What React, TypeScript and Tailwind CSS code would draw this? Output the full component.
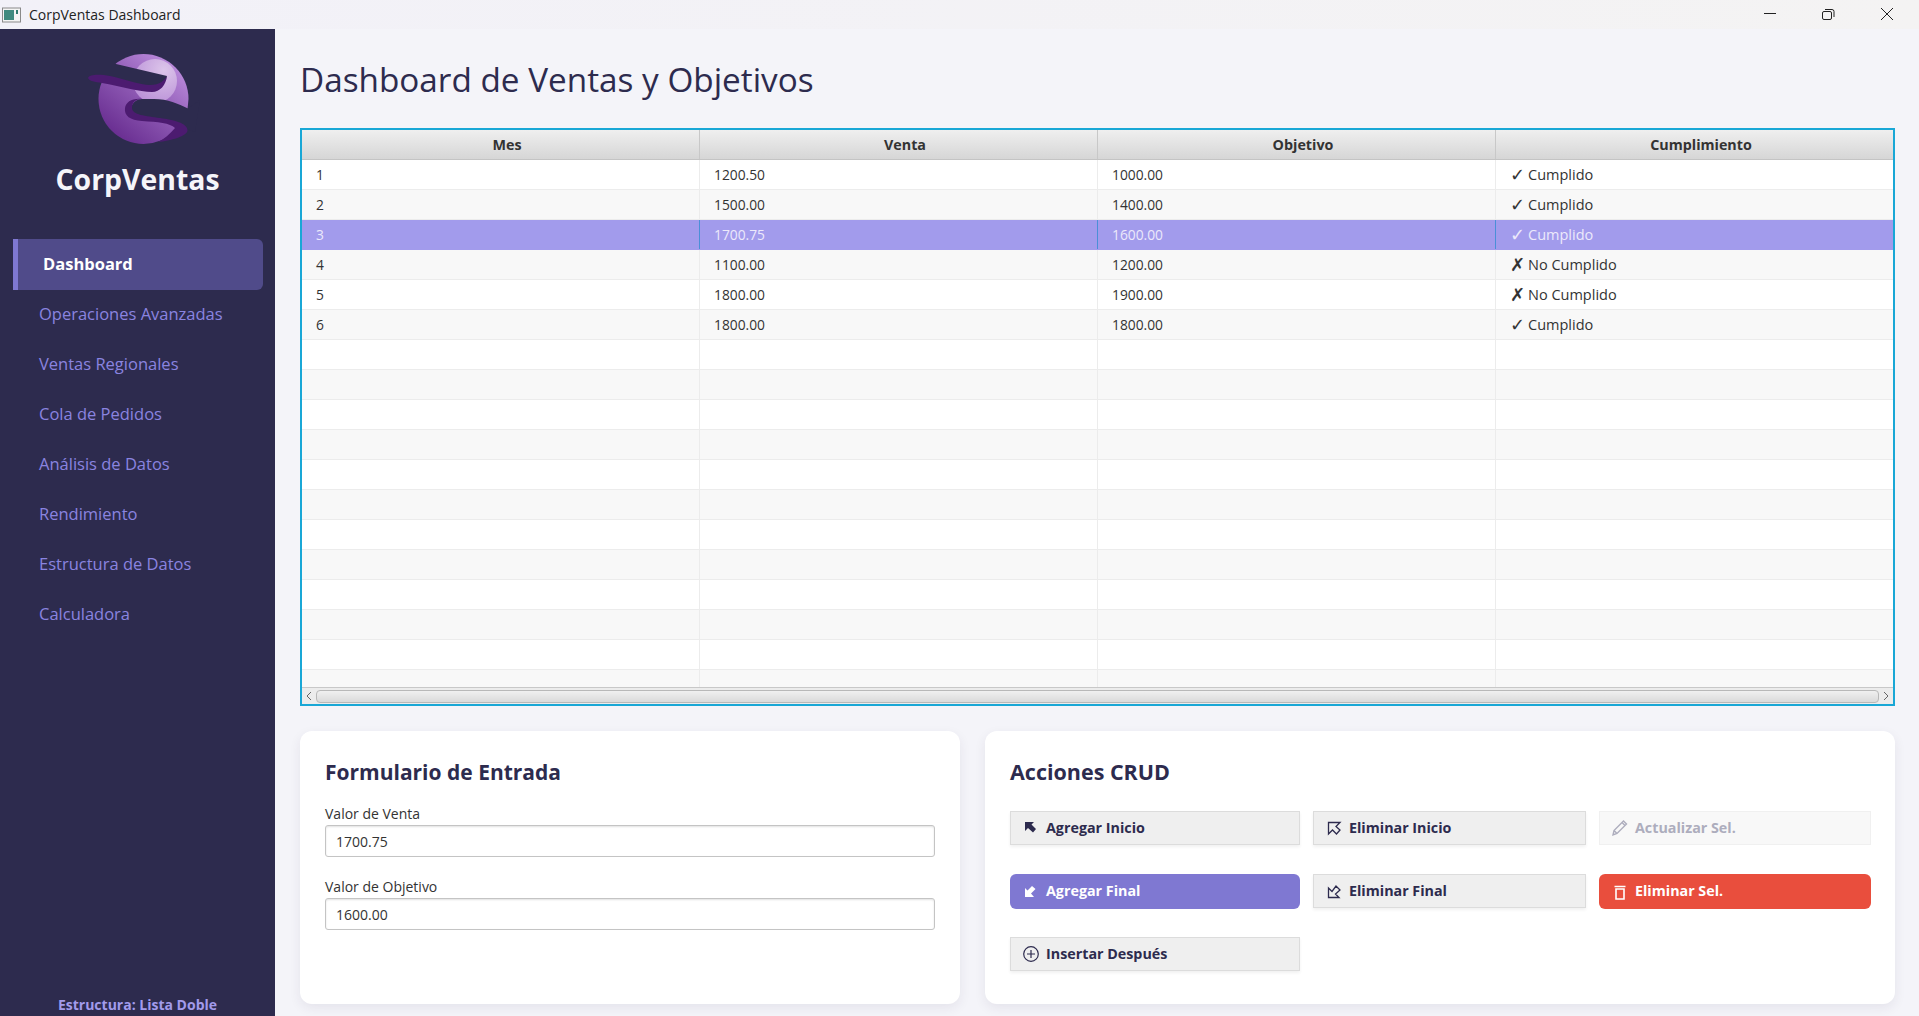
import React from "react";

const font = { fontFamily: '"Open Sans", "Noto Sans", sans-serif' };

const rows = [
  ["1", "1200.50", "1000.00", "✓ Cumplido"],
  ["2", "1500.00", "1400.00", "✓ Cumplido"],
  ["3", "1700.75", "1600.00", "✓ Cumplido"],
  ["4", "1100.00", "1200.00", "✗ No Cumplido"],
  ["5", "1800.00", "1900.00", "✗ No Cumplido"],
  ["6", "1800.00", "1800.00", "✓ Cumplido"],
  ...Array.from({ length: 12 }, () => ["", "", "", ""]),
];

const nav = ["Operaciones Avanzadas", "Ventas Regionales", "Cola de Pedidos", "Análisis de Datos", "Rendimiento", "Estructura de Datos", "Calculadora"];

function Logo() {
  return (
    <svg width="130" height="120" viewBox="0 0 130 120" className="block">
      <defs>
        <linearGradient id="sph" x1="0.85" y1="0.1" x2="0.2" y2="0.9">
          <stop offset="0" stopColor="#bb8bdc" />
          <stop offset="0.55" stopColor="#8a55b0" />
          <stop offset="1" stopColor="#6a2f92" />
        </linearGradient>
        <radialGradient id="hi" cx="0.7" cy="0.25" r="0.8">
          <stop offset="0" stopColor="#dcc5ea" />
          <stop offset="1" stopColor="#bb92d8" />
        </radialGradient>
      </defs>
      <circle cx="73.5" cy="59" r="45" fill="url(#sph)" />
      <circle cx="85" cy="41" r="22" fill="url(#hi)" />
      <path d="M118 68.5 C108 64 98 59 84 59 L72 59 C63 60 60 66 62 72 C66 77 90 78 104 84 L125 92 L130 60 Z" fill="#2d2b4e" />
      <path d="M55 68 C54 76 60 80 72 81 C88 82 100 83 105 88 C100 94 94 99 88 102 C100 101 118 96 117.500 90 C117 83 104 80 90 78 C76 76 62 75 62 68 C62 62 66 59 72 59 C62 58 56 62 55 68 Z" fill="#4c1b70" />
      <path d="M46 24 L97 36 C94 45 90 49 82 50 L50 42 L20 35 L10 20 L40 20 Z" fill="#2d2b4e" />
      <path d="M18 38 C19 34 30 34 40 36 C55 39 70 45 80 45 C90 45 95 40 97 36 C96 45 90 52 82 52 C70 52 50 46 32 43 C25 42 19 41 18 38 Z" fill="#4c1b70" />
    </svg>
  );
}

const I = ({ children }: { children: React.ReactNode }) => (
  <svg width="18" height="18" viewBox="0 0 18 18" className="block shrink-0">{children}</svg>
);

const icons: Record<string, React.ReactNode> = {
  ai: <I><path d="M3 3 H12 L9.500 5.500 L14 10 L11 13.500 L6 9 L3 12 Z" fill="currentColor" /></I>,
  ei: <I><path d="M3.500 3.500 H15 L11 7.500 L15 11 L11.500 15 L7.500 11 L3.500 15 Z" fill="none" stroke="currentColor" strokeWidth="1.300" /></I>,
  af: <I><path d="M3 14 V5 L5.500 7.500 L10 3 L13.500 6 L9 10.500 L12 14 Z" fill="currentColor" /></I>,
  ef: <I><path d="M3.500 15.500 V6 L7 9.500 L11 4 L15 8 L10.500 12 L14 15.500 Z" fill="none" stroke="currentColor" strokeWidth="1.300" /></I>,
  ins: <I><circle cx="9" cy="9" r="7.300" fill="none" stroke="currentColor" strokeWidth="1.200" /><path d="M9 5 V13 M5 9 H13" stroke="currentColor" strokeWidth="1.200" /></I>,
  up: <I><path d="M2 16 L3 11.500 L12.500 2 L15.500 5 L6 14.500 Z M11 3.500 L14 6.500 M3 11.500 L6 14.500" fill="none" stroke="currentColor" strokeWidth="1.400" /></I>,
  del: <I><path d="M3.500 3.500 H14.500 M5 6 H13 V16 H5 Z" fill="none" stroke="currentColor" strokeWidth="1.600" /></I>,
};

function Btn({ icon, label, kind }: { icon: string; label: string; kind?: "primary" | "danger" | "disabled" }) {
  const cls =
    kind === "primary"
      ? "h-[35px] rounded-md bg-[#7f78d2] pl-[12px] text-white"
      : kind === "danger"
      ? "h-[35px] rounded-md bg-[#e94e3d] pl-[12px] text-white"
      : kind === "disabled"
      ? "h-[34px] border border-[#f0f0f0] bg-[#f8f8f8] pl-[11px] text-[#adadbd]"
      : "h-[34px] border border-[#dcdcdc] bg-[#efefef] pl-[11px] text-[#2d2b4e] shadow-[0_2px_3px_rgba(0,0,0,0.06)]";
  return (
    <div className={"flex items-center gap-[6px] text-[14.300px] font-bold " + cls}>
      {icons[icon]}
      <span className="pb-[1px]">{label}</span>
    </div>
  );
}

function Field({ label, value }: { label: string; value: string }) {
  return (
    <div className="flex flex-col">
      <div className="text-[14px] leading-[19px] text-[#333]">{label}</div>
      <div className="mt-[2px] flex h-[32px] items-center rounded-[3px] border border-[#c4c4c4] bg-white pl-[10px] text-[14px] text-[#333] shadow-[inset_0_1px_2px_rgba(0,0,0,0.12)]">
        {value}
      </div>
    </div>
  );
}

function Mark({ text }: { text: string }) {
  const [m, ...rest] = text.split(" ");
  return (
    <span className="flex items-center text-[14.500px]">
      <span className="w-[18px] text-[18px] leading-none" style={{ fontFamily: '"DejaVu Sans", sans-serif' }}>{m}</span>
      <span>{rest.join(" ")}</span>
    </span>
  );
}

export default function App() {
  return (
    <div className="flex h-[1016px] w-[1919px] flex-col overflow-hidden bg-[#f4f4f9]" style={font}>
      <div className="flex h-[29px] shrink-0 items-center bg-gradient-to-r from-[#f2f1f8] to-[#f4f3f3] text-[14px] text-[#222]">
        <svg width="20" height="16" viewBox="0 0 20 16" className="ml-[2px]">
          <rect x="0.500" y="1" width="18" height="14" fill="#f4f4f4" stroke="#8a8a8a" />
          <rect x="2" y="3" width="10" height="10" fill="#3f8a7f" />
          <rect x="14" y="3" width="2" height="4" fill="#2f7a6f" />
        </svg>
        <span className="ml-[7px]">CorpVentas Dashboard</span>
        <div className="ml-auto flex h-full">
          <svg width="58" height="29" viewBox="0 0 58 29"><path d="M16 13.500 H28" stroke="#222" /></svg>
          <svg width="58" height="29" viewBox="0 0 58 29" fill="none" stroke="#222">
            <rect x="16.500" y="11.500" width="9" height="8" rx="1.500" />
            <path d="M19 9.500 H26 Q28 9.500 28 11.500 V17" />
          </svg>
          <svg width="55" height="29" viewBox="0 0 55 29"><path d="M17 8 L29 20 M29 8 L17 20" stroke="#222" /></svg>
        </div>
      </div>
      <div className="flex min-h-0 flex-1">
        <aside className="flex w-[275px] shrink-0 flex-col bg-[#2d2b4e]">
          <div className="ml-[70px] mt-[11px]"><Logo /></div>
          <div className="mt-[-1px] text-center text-[28.400px] font-bold leading-[40px] text-[#f5f5fa]">CorpVentas</div>
          <div className="ml-[13px] mr-[12px] mt-[40px] flex h-[51px] items-center rounded-r-md border-l-[5px] border-[#7f78d2] bg-[#504b8a] pl-[25px] text-[16.500px] font-bold text-white">
            Dashboard
          </div>
          <div className="mt-[-1px] flex flex-col">
            {nav.map((n) => (
              <div key={n} className="flex h-[50.100px] items-center pl-[39px] text-[16.500px] text-[#8a84e0]">{n}</div>
            ))}
          </div>
          <div className="mt-auto pb-[1px] text-center text-[14px] font-bold leading-[20px] text-[#a29bec]">Estructura: Lista Doble</div>
        </aside>
        <main className="flex min-w-0 flex-1 flex-col pl-[25px] pr-[24px]">
          <h1 className="mt-[26px] text-[33.300px] font-normal leading-[48px] text-[#2d2b4e]">Dashboard de Ventas y Objetivos</h1>
          <div className="mt-[25px] flex h-[578px] flex-col border-2 border-[#19a7d6] bg-white">
            <div className="flex h-[30px] shrink-0 border-b border-[#c4c4c4] bg-gradient-to-b from-[#efefef] to-[#d6d6d6] text-[14.300px] font-bold text-[#333]">
              {["Mes", "Venta", "Objetivo", "Cumplimiento"].map((h) => (
                <div key={h} className="flex flex-1 items-center justify-center border-r border-[#c8c8c8] pl-[13px] last:border-r-0">{h}</div>
              ))}
            </div>
            <div className="min-h-0 flex-1 overflow-hidden">
              {rows.map((r, i) => {
                const sel = i === 2;
                return (
                  <div key={i} className={"flex h-[30px] border-b text-[13.800px] " + (sel ? "border-[#a29bec] bg-[#a29bec] text-[#ece9fb]" : (i % 2 ? "border-[#ececec] bg-[#f8f8f8] text-[#333]" : "border-[#ececec] bg-white text-[#333]"))}>
                    {r.map((c, j) => (
                      <div key={j} className={"flex flex-1 items-center pl-[14px] pt-[1px] last:border-r-0 border-r " + (sel ? "border-[#4a8fd8]" : "border-[#ececec]")}>
                        {j === 3 && c ? <Mark text={c} /> : c}
                      </div>
                    ))}
                  </div>
                );
              })}
            </div>
            <div className="flex h-[17px] shrink-0 items-center border-t border-[#c8c8c8] bg-[#ececec] px-[1px]">
              <svg width="12" height="14" viewBox="0 0 12 14" className="shrink-0"><path d="M8 3 L4 7 L8 11" fill="none" stroke="#666" /></svg>
              <div className="mx-[1px] h-[13px] flex-1 rounded-[4px] border border-[#b8b8b8] bg-gradient-to-b from-[#f0f0f0] to-[#dadada]" />
              <svg width="12" height="14" viewBox="0 0 12 14" className="shrink-0"><path d="M4 3 L8 7 L4 11" fill="none" stroke="#666" /></svg>
            </div>
          </div>
          <div className="mt-[25px] flex h-[273px] gap-[25px]">
            <section className="w-[660px] shrink-0 rounded-xl bg-white px-[25px] shadow-[0_4px_12px_rgba(45,43,78,0.08)]">
              <h2 className="mt-[25px] text-[21px] font-bold leading-[32px] text-[#2d2b4e]">Formulario de Entrada</h2>
              <div className="mt-[16px] flex flex-col gap-[20px]">
                <Field label="Valor de Venta" value="1700.75" />
                <Field label="Valor de Objetivo" value="1600.00" />
              </div>
            </section>
            <section className="min-w-0 flex-1 rounded-xl bg-white px-[25px] shadow-[0_4px_12px_rgba(45,43,78,0.08)]">
              <h2 className="mt-[25px] text-[21.500px] font-bold leading-[32px] text-[#2d2b4e]">Acciones CRUD</h2>
              <div className="mt-[23px] grid auto-rows-[34px] grid-cols-[290px_273px_272px] items-start gap-x-[13px] gap-y-[29px]">
                <Btn icon="ai" label="Agregar Inicio" />
                <Btn icon="ei" label="Eliminar Inicio" />
                <Btn icon="up" label="Actualizar Sel." kind="disabled" />
                <Btn icon="af" label="Agregar Final" kind="primary" />
                <Btn icon="ef" label="Eliminar Final" />
                <Btn icon="del" label="Eliminar Sel." kind="danger" />
                <Btn icon="ins" label="Insertar Después" />
              </div>
            </section>
          </div>
        </main>
      </div>
    </div>
  );
}
